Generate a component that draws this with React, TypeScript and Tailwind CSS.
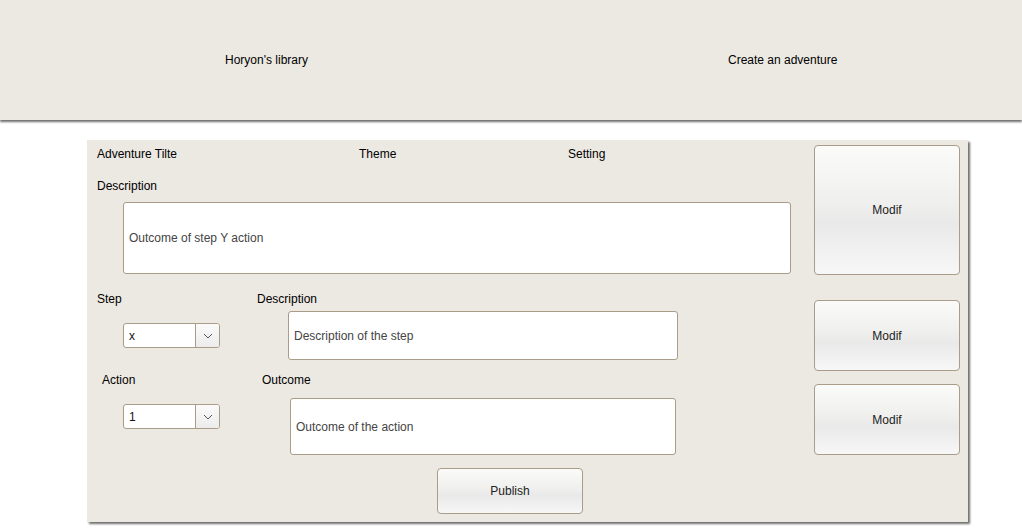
const font = { fontFamily: '"Liberation Sans", Arial, sans-serif' };

function GlossButton({ label, className }: { label: string; className: string }) {
  return (
    <div
      className={`flex items-center justify-center rounded-[4px] border border-[#a99c88] bg-[linear-gradient(to_bottom,#fbfbfa_0%,#efefee_45%,#e9e9e9_60%,#f7f7f7_100%)] text-[12px] text-[#222] ${className}`}
    >
      {label}
    </div>
  );
}

function Select({ value }: { value: string }) {
  return (
    <div className="flex h-[25px] w-[97px] overflow-hidden rounded-[3px] border border-[#a99c88] bg-white text-[12px]">
      <div className="flex flex-1 items-center pl-[5px] text-[#111]">{value}</div>
      <div className="flex w-[24px] items-center justify-center border-l border-[#a99c88] bg-[linear-gradient(to_bottom,#fafafa,#ececec)]">
        <svg width="10" height="6" viewBox="0 0 10 6">
          <polyline points="1,1 5,5 9,1" fill="none" stroke="#555" strokeWidth="1" />
        </svg>
      </div>
    </div>
  );
}

function TextBox({ text, className }: { text: string; className: string }) {
  return (
    <div className={`flex items-center rounded-[3px] border border-[#a99c88] bg-white pl-[5px] text-[12px] text-[#444] ${className}`}>
      {text}
    </div>
  );
}

export default function App() {
  return (
    <div className="min-h-[529px] w-[1022px] bg-white text-[12px] leading-[14px] text-black" style={font}>
      {/* Header */}
      <div className="flex h-[120px] items-center bg-[#ece9e3] shadow-[0_2px_2px_#6f6f6f]">
        <div className="ml-[225px]">Horyon's library</div>
        <div className="ml-[420px]">Create an adventure</div>
      </div>

      {/* Panel */}
      <div className="ml-[87px] mt-[20px] flex h-[382px] w-[881px] bg-[#ece9e3] shadow-[2px_2px_2px_#6f6f6f]">
        {/* Left column */}
        <div className="flex w-[727px] flex-col pl-[10px]">
          <div className="mt-[7px] flex h-[14px]">
            <div className="w-[262px]">Adventure Tilte</div>
            <div className="w-[209px]">Theme</div>
            <div>Setting</div>
          </div>
          <div className="mt-[18px] h-[14px]">Description</div>
          <TextBox text="Outcome of step Y action" className="ml-[26px] mt-[9px] h-[72px] w-[668px]" />

          <div className="mt-[18px] flex">
            <div className="flex w-[160px] flex-col">
              <div className="h-[14px]">Step</div>
              <div className="ml-[26px] mt-[17px]">
                <Select value="x" />
              </div>
            </div>
            <div className="flex flex-col">
              <div className="h-[14px]">Description</div>
              <TextBox text="Description of the step" className="ml-[31px] mt-[5px] h-[49px] w-[390px]" />
            </div>
          </div>

          <div className="mt-[13px] flex">
            <div className="flex w-[160px] flex-col">
              <div className="ml-[5px] h-[14px]">Action</div>
              <div className="ml-[26px] mt-[17px]">
                <Select value="1" />
              </div>
            </div>
            <div className="ml-[5px] flex flex-col">
              <div className="h-[14px]">Outcome</div>
              <TextBox text="Outcome of the action" className="ml-[28px] mt-[11px] h-[57px] w-[386px]" />
            </div>
          </div>

          <GlossButton label="Publish" className="ml-[340px] mt-[13px] h-[46px] w-[146px]" />
        </div>

        {/* Right column */}
        <div className="flex w-[146px] flex-col pt-[5px]">
          <GlossButton label="Modif" className="h-[130px]" />
          <GlossButton label="Modif" className="mt-[25px] h-[71px]" />
          <GlossButton label="Modif" className="mt-[13px] h-[71px]" />
        </div>
      </div>
    </div>
  );
}
